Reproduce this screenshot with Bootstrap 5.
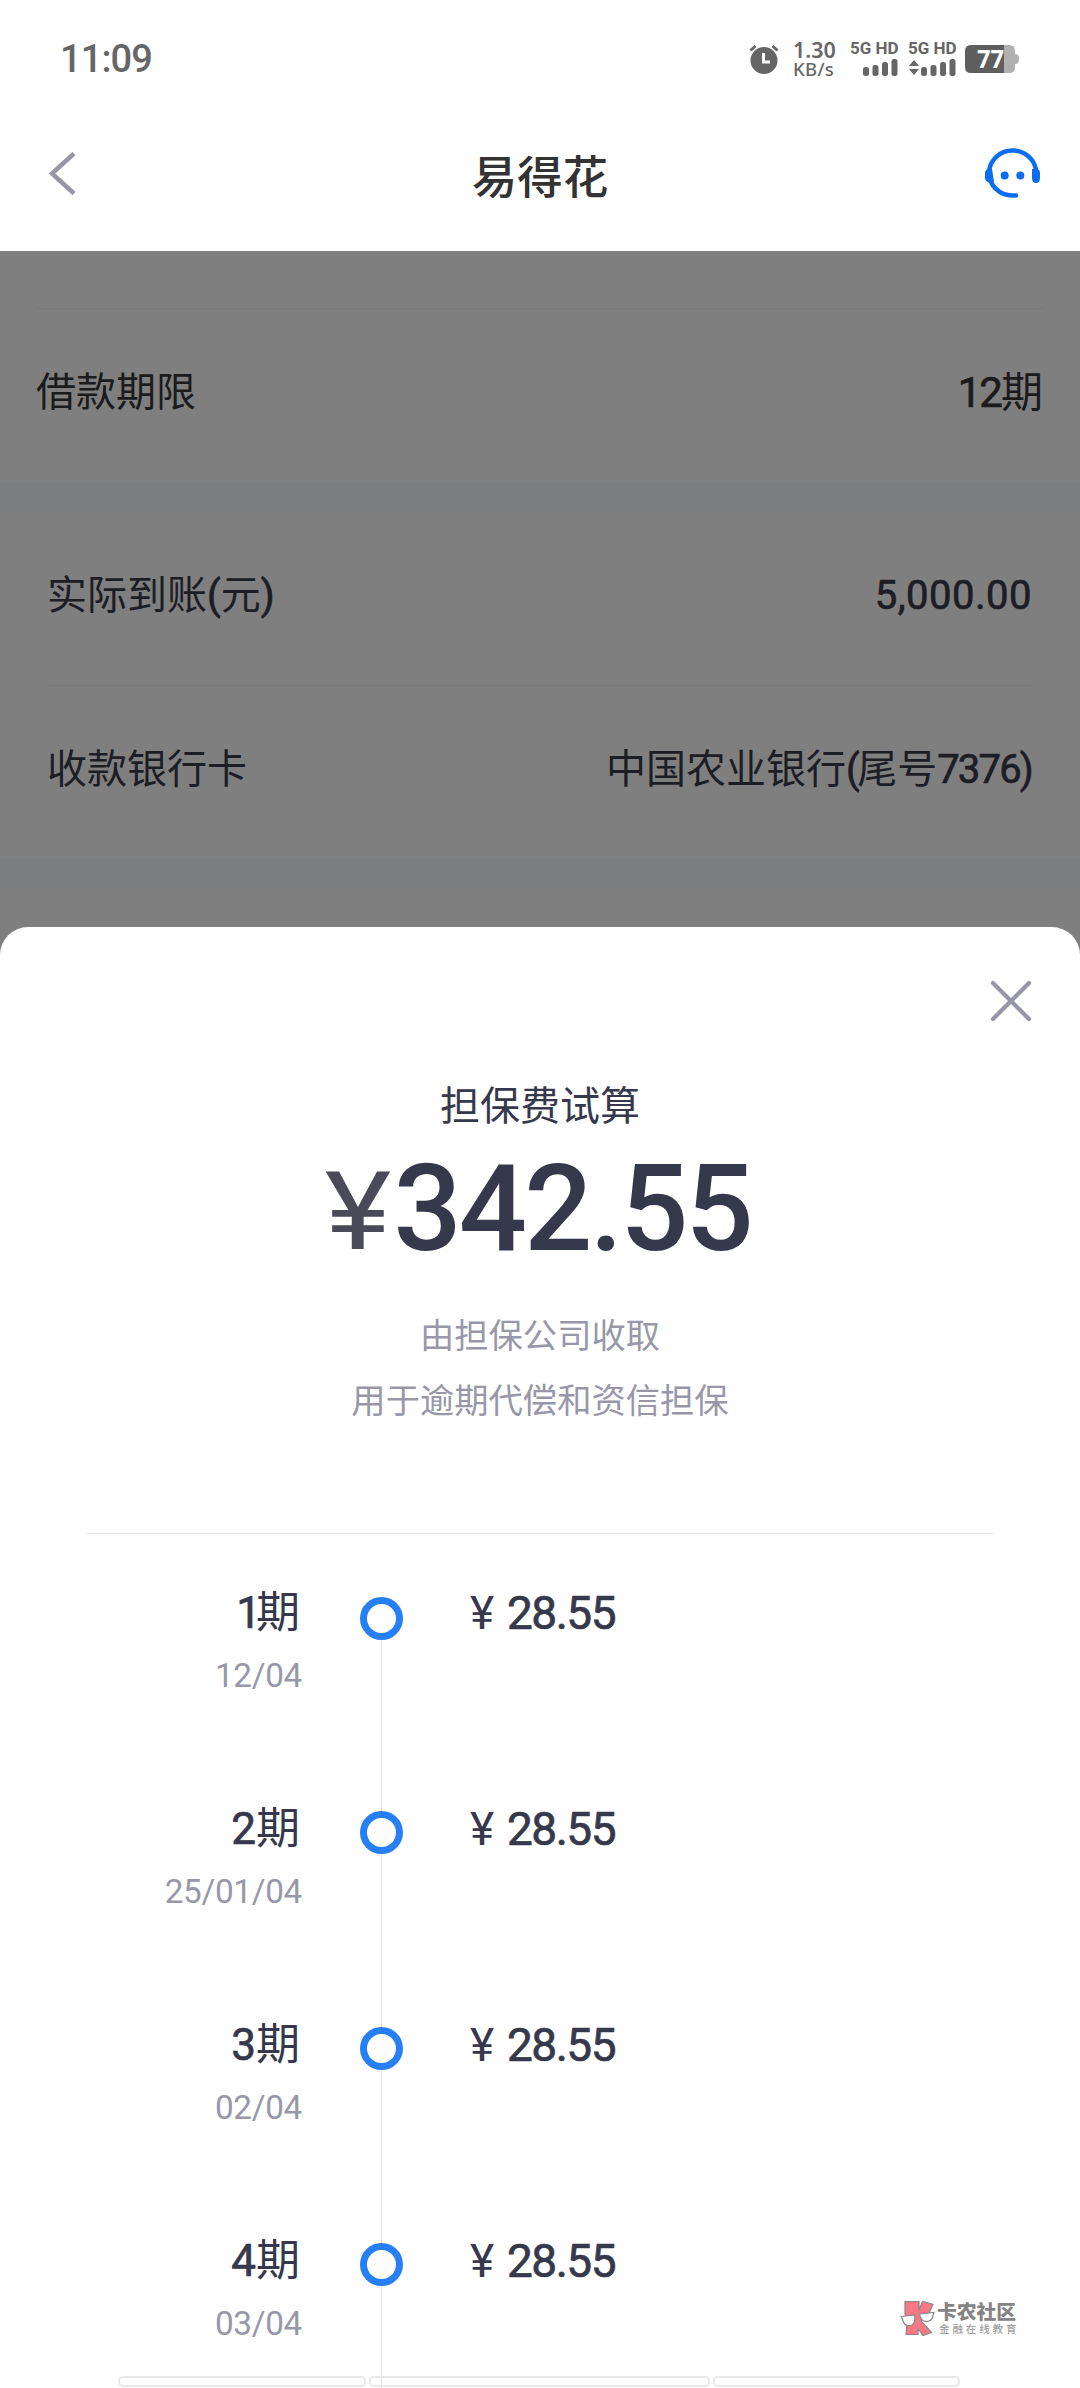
<!DOCTYPE html>
<html lang="zh-CN">
<head>
<meta charset="utf-8">
<meta name="viewport" content="width=device-width, initial-scale=1">
<title>易得花</title>
<link rel="stylesheet" href="https://cdn.jsdelivr.net/npm/bootstrap@5.3.0/dist/css/bootstrap.min.css">
<style>
  body { width: 1080px; height: 2388px; overflow: hidden; background: #7f7f7f; color: #36384b;
         font-family: Roboto, "Noto Sans CJK SC", sans-serif; font-size: 40px; line-height: 1; }
  svg { display: block; flex: none; overflow: visible; }
  .cjk { font-family: "Noto Sans CJK SC", sans-serif; }
  .semi { -webkit-text-stroke: .7px currentColor; }
  /* status bar */
  .app-top { height: 251px; background: #fff; }
  .status { height: 118px; padding-left: 60px; padding-right: 61px; color: #666; }
  .clock { font-size: 38px; font-weight: 500; letter-spacing: -.9px; }
  .speed { font-family: "Noto Sans", sans-serif; width: 44px; font-weight: 600; font-size: 21.5px; line-height: 19px; margin: 0 13px 0 14px; white-space: nowrap; }
  .speed small { font-size: 18.5px; font-weight: 500; display: block; letter-spacing: .3px; }
  .sim { width: 48px; font-weight: 700; font-size: 17px; line-height: 13px; white-space: nowrap; }
  .sim + .sim { margin-left: 10px; }
  .battery { margin-left: 9px; }
  .title-bar { height: 111px; padding-left: 48px; padding-right: 39px; }
  .title-bar h1 { font-size: 45.5px; font-weight: 500; color: #333; line-height: 60px; margin-right: 9px; }
  /* dimmed page */
  .dim { height: 676px; color: #1d1d24; }
  .term { margin: 57px 36px 0; height: 174px; border-top: 1px solid #79797b; color: #1b1b1b; padding-right: 1px; padding-bottom: 5px; }
  .term .val { font-size: 42px; letter-spacing: -2px; }
  .val span { letter-spacing: 0; -webkit-text-stroke: 0; }
  .gap-band { height: 30px; background: #7b7c7e; }
  .info { margin: 0 48px 0 47px; height: 173px; }
  .info + .info { border-top: 1px solid #79797b; padding-bottom: 5px; }
  .received { padding-bottom: 6px; }
  .tight { letter-spacing: -2.5px; }
  .snug { letter-spacing: -1.8px; }
  .loose { letter-spacing: .5px; }
  /* sheet */
  .sheet { height: 1461px; background: #fff; border-radius: 28px 28px 0 0; }
  .close-row { padding: 53px 47px 0 0; }
  .sheet-title { padding-top: 61px; }
  .amount { font-size: 120px; font-weight: 500; height: 135px; line-height: 100px; padding-top: 36px; letter-spacing: -2.8px; }
  .yen-big { font-size: 109px; font-weight: 400; color: #4a4a58; transform: scaleX(1.16); margin-right: 10px; line-height: 106px; }
  .note { font-size: 34.3px; line-height: 65px; color: #9797a8; padding-top: 43px; }
  .rule { height: 1px; background: #ececf0; margin: 102px 85px 0; }
  .plan { height: 216px; }
  .when { width: 302px; padding-top: 55px; }
  .term-no { font-size: 44px; line-height: 48px; padding-right: 2px; white-space: nowrap; }
  .term-no span { -webkit-text-stroke: 0; }
  .plan:first-child .term-no span { margin-left: -5px; }
  .date { font-size: 33.3px; line-height: 36px; color: #9797a8; margin-top: 21px; letter-spacing: -.3px; }
  .rail { width: 43px; margin-left: 58px; margin-right: 67px; }
  .dot { width: 43px; height: 43px; border: 7px solid #277ff5; border-radius: 50%; flex: none; }
  .stem { width: 1px; background: #e3e3e7; }
  .stem-top { height: 61px; flex: none; }
  .plan:first-child .stem-top { height: 63px; background: none; }
  .fee { padding-top: 55px; line-height: 48px; font-size: 46px; letter-spacing: -1.5px; }
  .fee .yen { width: 37px; -webkit-text-stroke: 0; }
  .tabs { width: 842px; height: 11px; margin: -12px 0 0 118px; position: relative; gap: 3px; }
  .tabs div { border: 2px solid #e8e8e8; border-radius: 5px; height: 11px; }
  .watermark { position: absolute; left: 900px; top: 2300px; color: #858585; }
  .wm-name { font-size: 19.8px; font-weight: 900; line-height: 22px; }
  .wm-sub { font-size: 10.5px; line-height: 13px; letter-spacing: 2.9px; color: #a0a0a0; font-weight: 500; padding-left: 2px; }
</style>
<script src="https://cdn.jsdelivr.net/npm/bootstrap@5.3.0/dist/js/bootstrap.bundle.min.js"></script>
</head>
<body>
<header class="app-top">
  <div class="status d-flex align-items-center justify-content-between">
    <div class="clock">11:09</div>
    <div class="d-flex align-items-center">
      <svg width="30" height="32" viewBox="0 0 30 32" fill="none" stroke="#666"><circle cx="15" cy="17.500" r="13.500" fill="#666" stroke="none"/><path d="M1.500 7.500 6.500 3M28.500 7.500 23.500 3" stroke-width="3"/><path d="M14.500 10v9h6.500" stroke="#fff" stroke-width="3"/></svg>
      <div class="speed">1.30<small>KB/s</small></div>
      <div class="sim">5G HD
        <svg class="ms-auto mt-1" width="36" height="17" viewBox="0 0 36 17" fill="#666"><rect x="1" y="8" width="6" height="9" rx="2.500"/><rect x="10.500" y="6" width="6" height="11" rx="2.500"/><rect x="20" y="3" width="6" height="14" rx="2.500"/><rect x="29.500" y="0" width="6" height="17" rx="2.500"/></svg></div>
      <div class="sim">5G HD
        <svg class="ms-auto mt-1" width="48" height="17" viewBox="0 0 48 17" fill="#666"><path d="M1 7 6 1l5 6zM1 10h10l-5 6z"/><rect x="13" y="8" width="6" height="9" rx="2.500"/><rect x="22.500" y="6" width="6" height="11" rx="2.500"/><rect x="32" y="3" width="6" height="14" rx="2.500"/><rect x="41.500" y="0" width="6" height="17" rx="2.500"/></svg></div>
      <svg class="battery" width="54" height="28" viewBox="0 0 54 28"><path d="M39 0h5q6 0 6 6v3q4 0 4 5t-4 5v3q0 6-6 6h-5z" fill="#b0b0b0"/><path d="M39 0H6Q0 0 0 6v16q0 6 6 6h33z" fill="#5e5e5e"/><text x="12" y="22.500" font-family="Open Sans, sans-serif" font-weight="700" font-size="24.500" fill="#fff" textLength="27" lengthAdjust="spacingAndGlyphs">77</text></svg>
    </div>
  </div>
  <div class="title-bar d-flex align-items-center justify-content-between">
    <svg width="56" height="44" viewBox="0 0 56 44" fill="none" stroke="#9696a6" stroke-width="4.500"><path d="M26 1.500 4 21.500 26 41.500"/></svg>
    <h1 class="cjk mb-0">易得花</h1>
    <svg width="56" height="50" viewBox="0 0 56 50"><path d="M51 26A23.500 22.500 0 1 0 27.500 46.500H31" fill="none" stroke="#0a6cf0" stroke-width="4.500" stroke-linecap="round"/><path d="M5 19.500Q0 20 0 24v5q0 4 6 5l3-1-2-13zM47 20h4q4 0 4 4v5q0 5-4 5t-4-5z" fill="#0a6cf0"/><circle cx="19.700" cy="26.500" r="4" fill="#0a6cf0"/><circle cx="35.300" cy="26.500" r="4" fill="#0a6cf0"/></svg>
  </div>
</header>

<main class="dim overflow-hidden">
  <div class="term d-flex align-items-center justify-content-between"><span>借款期限</span><span class="val semi">12<span>期</span></span></div>
  <div class="gap-band"></div>
  <div class="info received d-flex align-items-center justify-content-between"><span>实际到账<span class="semi">(</span>元<span class="semi">)</span></span><span class="semi loose">5,000.00</span></div>
  <div class="info d-flex align-items-center justify-content-between"><span>收款银行卡</span><span>中国农业银行<span class="tight semi">(</span>尾号<span class="snug semi">7376)</span></span></div>
  <div class="gap-band"></div>
</main>

<section class="sheet overflow-hidden">
  <div class="close-row d-flex justify-content-end"><svg width="42" height="42" viewBox="0 0 42 42" fill="none" stroke="#9696a6" stroke-width="4.200" stroke-linecap="round"><path d="M2 3 38 39M38 3 2 39"/></svg></div>
  <div class="text-center">
    <div class="cjk sheet-title">担保费试算</div>
    <div class="amount d-flex justify-content-center"><span class="yen-big">¥</span><span>342.55</span></div>
    <div class="note cjk">由担保公司收取<br>用于逾期代偿和资信担保</div>
  </div>
  <div class="rule"></div>
  <div>
    <div class="plan d-flex">
      <div class="when text-end"><div class="term-no semi">1<span>期</span></div><div class="date">12/04</div></div>
      <div class="rail d-flex flex-column align-items-center"><div class="stem stem-top"></div><div class="dot"></div><div class="stem flex-grow-1"></div></div>
      <div class="fee semi d-flex"><span class="yen">¥</span>28.55</div>
    </div>
    <div class="plan d-flex">
      <div class="when text-end"><div class="term-no semi">2<span>期</span></div><div class="date">25/01/04</div></div>
      <div class="rail d-flex flex-column align-items-center"><div class="stem stem-top"></div><div class="dot"></div><div class="stem flex-grow-1"></div></div>
      <div class="fee semi d-flex"><span class="yen">¥</span>28.55</div>
    </div>
    <div class="plan d-flex">
      <div class="when text-end"><div class="term-no semi">3<span>期</span></div><div class="date">02/04</div></div>
      <div class="rail d-flex flex-column align-items-center"><div class="stem stem-top"></div><div class="dot"></div><div class="stem flex-grow-1"></div></div>
      <div class="fee semi d-flex"><span class="yen">¥</span>28.55</div>
    </div>
    <div class="plan d-flex">
      <div class="when text-end"><div class="term-no semi">4<span>期</span></div><div class="date">03/04</div></div>
      <div class="rail d-flex flex-column align-items-center"><div class="stem stem-top"></div><div class="dot"></div><div class="stem flex-grow-1"></div></div>
      <div class="fee semi d-flex"><span class="yen">¥</span>28.55</div>
    </div>
  </div>
</section>
<div class="tabs d-flex"><div style="width:248px"></div><div style="width:341px"></div><div style="width:247px"></div></div>

<div class="watermark cjk d-flex">
  <svg width="36" height="37" viewBox="0 0 36 37" stroke="#888" stroke-width="1.200"><path d="M5 1.500H19V10L22.500 1.500 33 4.500 29 13 21 21 31.500 32.500 23 35.500 18 29V34.500H6L7 24 5 14z" fill="#f77887"/><path d="M1 16.500 14.500 15Q16 22 12 25 4 27.500 2.500 19zM19.500 14 34 12.500 33 15q0 5.500-6 6.500-6 .5-7.500-7.500z" fill="#fff"/></svg>
  <div style="margin-left:1px"><div class="wm-name">卡农社区</div><div class="wm-sub">金融在线教育</div></div>
</div>
</body>
</html>
